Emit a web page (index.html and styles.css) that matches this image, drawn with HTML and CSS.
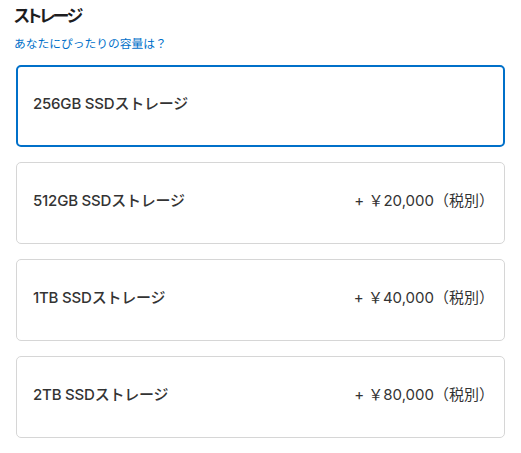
FILE: index.html
```html
<!DOCTYPE html>
<html lang="ja">
<head>
<meta charset="utf-8">
<link rel="stylesheet" href="styles.css">
</head>
<body>
<div class="page">
  <h2 class="title">ストレージ</h2>
  <a class="help" href="#">あなたにぴったりの容量は？</a>
  <div class="options">
    <div class="option selected"><span class="name">256GB SSDストレージ</span></div>
    <div class="option"><span class="name">512GB SSDストレージ</span><span class="price">+ ￥20,000（税別）</span></div>
    <div class="option"><span class="name">1TB SSDストレージ</span><span class="price">+ ￥40,000（税別）</span></div>
    <div class="option"><span class="name">2TB SSDストレージ</span><span class="price">+ ￥80,000（税別）</span></div>
  </div>
</div>
</body>
</html>
```
FILE: styles.css
```css
html, body {
  margin: 0;
  padding: 0;
  background: #fff;
}
body {
  font-family: Inter, "Noto Sans CJK JP", sans-serif;
  color: #333;
}
.page {
  padding: 4px 16px 0 14px;
  width: 491px;
}
.title {
  margin: 0;
  font-size: 17px;
  font-weight: 700;
  line-height: 24px;
  color: #1d1d1f;
  font-feature-settings: "palt";
  letter-spacing: -2.4px;
}
.help {
  display: block;
  margin-top: 8px;
  font-size: 11.75px;
  line-height: 16px;
  color: #0070c9;
  text-decoration: none;
}
.options {
  margin-top: 13px;
  margin-left: 2px;
  display: flex;
  flex-direction: column;
  gap: 15px;
}
.option {
  box-sizing: border-box;
  height: 82px;
  border: 1px solid #d6d6d6;
  border-radius: 5px;
  display: flex;
  align-items: center;
  justify-content: space-between;
  padding: 0 10px 7px 16px;
}
.option.selected {
  border: 2px solid #0070c9;
  padding-left: 15px;
}
.name {
  font-size: 15px;
  font-weight: 500;
  color: #333;
  letter-spacing: -0.2px;
}
.price {
  font-size: 15px;
  color: #333;
}
```
